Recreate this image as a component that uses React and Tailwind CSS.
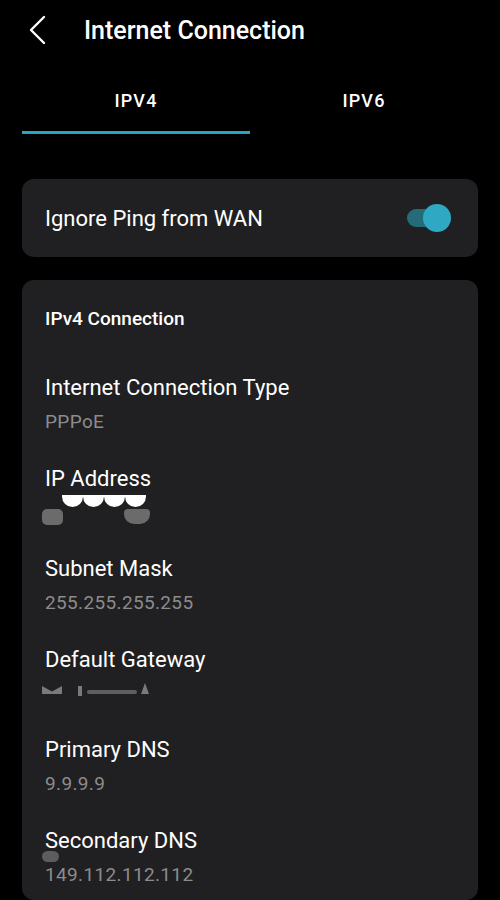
const rows = [
    { label: 'Internet Connection Type', value: 'PPPoE' },
    { label: 'IP Address', value: null, mask: 'ip' },
    { label: 'Subnet Mask', value: '255.255.255.255' },
    { label: 'Default Gateway', value: null, mask: 'gw' },
    { label: 'Primary DNS', value: '9.9.9.9' },
    { label: 'Secondary DNS', value: '149.112.112.112', mask: 'dns' },
];

function IpMask() {
    return (
        <div className="relative h-6">
            <div className="absolute left-[17px] top-[-6px] flex">
                {[0, 1, 2, 3].map(i => (
                    <div key={i} className="w-[21px] h-[12px] bg-white rounded-b-full" />
                ))}
            </div>
            <div className="absolute left-[-3px] top-[8px] w-[21px] h-[16px] bg-[#6b6b6b] rounded-[5px]" />
            <div className="absolute left-[79px] top-[8px] w-[26px] h-[15px] bg-[#6b6b6b] rounded-b-[10px] rounded-t-[4px]" />
        </div>
    );
}

function GwMask() {
    return (
        <div className="relative h-6">
            <div className="absolute left-[-3px] top-[4px] w-[20px] h-[8px] bg-[#7a7a7a] [clip-path:polygon(0_0,50%_70%,100%_0,100%_100%,0_100%)]" />
            <div className="absolute left-[33px] top-[4px] w-[4px] h-[10px] bg-[#7a7a7a]" />
            <div className="absolute left-[42px] top-[8px] w-[50px] h-[4px] bg-[#5e5e5e] rounded-full" />
            <div className="absolute left-[96px] top-[1px] w-[8px] h-[11px] bg-[#7a7a7a] [clip-path:polygon(50%_0,100%_100%,0_100%)]" />
        </div>
    );
}

export default function App() {
    return (
        <div className="w-[500px] h-[900px] bg-black text-white overflow-hidden font-['Roboto','Liberation_Sans',sans-serif]">

            {/* Header */}
            <div className="h-[60px] flex items-center">
                <svg width="20" height="30" viewBox="0 0 20 30" className="ml-[28px]" fill="none">
                    <polyline points="16,2 3,15 16,28" stroke="white" strokeWidth="2.4" strokeLinecap="round" strokeLinejoin="round" />
                </svg>
                <h1 className="ml-[36px] text-[25px] font-medium leading-none">Internet Connection</h1>
            </div>

            {/* Tabs */}
            <div className="mx-[22px] mt-[10px] flex">
                <div className="w-[228px] flex flex-col items-center">
                    <span className="h-[61px] flex items-center text-[18px] font-medium tracking-[1.2px]">IPV4</span>
                    <div className="w-full h-[3px] bg-[#2ba6c2]" />
                </div>
                <div className="w-[228px] flex flex-col items-center">
                    <span className="h-[61px] flex items-center text-[18px] font-medium tracking-[1.2px]">IPV6</span>
                </div>
            </div>

            {/* Ping toggle */}
            <div className="mx-[22px] mt-[45px] h-[78px] rounded-[12px] bg-[#202022] flex items-center justify-between pl-[23px] pr-[27px]">
                <span className="text-[22px]">Ignore Ping from WAN</span>
                <div className="relative w-[44px] h-[28px] flex items-center">
                    <div className="w-[40px] h-[18px] rounded-full bg-[#246c79]" />
                    <div className="absolute right-0 w-[28px] h-[28px] rounded-full bg-[#2fa8c3]" />
                </div>
            </div>

            {/* IPv4 Connection */}
            <div className="mx-[22px] mt-[23px] rounded-[12px] bg-[#202022] pt-[27px] pb-[12px] px-[23px]">
                <h2 className="text-[19px] font-medium leading-[24px]">IPv4 Connection</h2>
                <div className="flex flex-col gap-[30px] mt-[43px]">
                    {rows.map(row => (
                        <div key={row.label} className="flex flex-col gap-[8px]">
                            <span className="text-[22px] leading-[28px]">{row.label}</span>
                            {row.mask === 'ip' ? (
                                <IpMask />
                            ) : row.mask === 'gw' ? (
                                <GwMask />
                            ) : (
                                <div className="relative">
                                    <span className="text-[19px] leading-[24px] text-[#8c8c8c] tracking-[0.35px]">{row.value}</span>
                                    {row.mask === 'dns' && (
                                        <div className="absolute left-[-3px] top-[-12px] w-[17px] h-[11px] rounded-full bg-[#5c5c5c]" />
                                    )}
                                </div>
                            )}
                        </div>
                    ))}
                </div>
            </div>
        </div>
    );
}
